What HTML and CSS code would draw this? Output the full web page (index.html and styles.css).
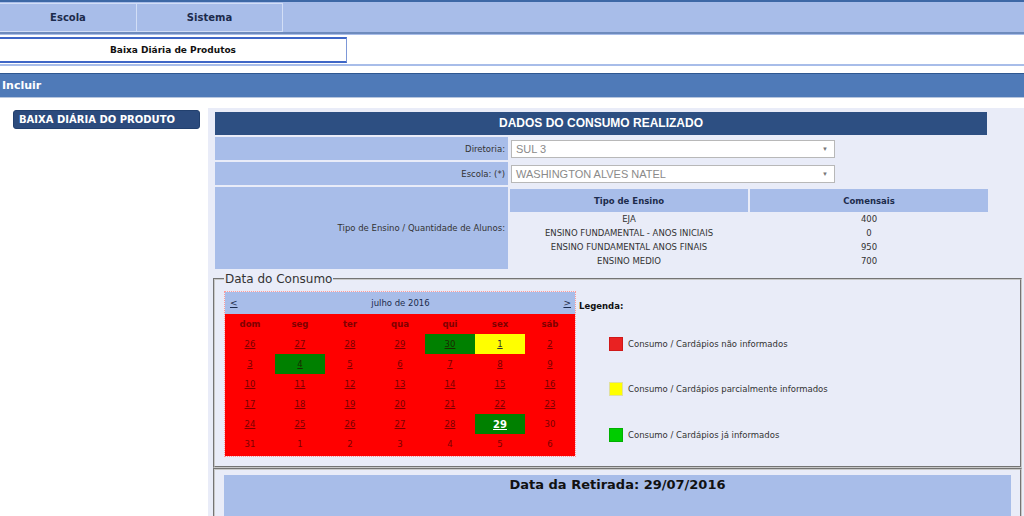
FILE: index.html
```html
<!DOCTYPE html>
<html lang="pt-BR">
<head>
<meta charset="utf-8">
<title>Baixa Diária de Produtos</title>
<link rel="stylesheet" href="styles.css">
</head>
<body>
<div class="topbar">
  <div class="tab">Escola</div>
  <div class="tab tab-second">Sistema</div>
</div>
<div class="subbar">
  <div class="subtab">Baixa Diária de Produtos</div>
</div>
<div class="titlebar">Incluir</div>
<div class="main">
  <div class="sidebar">
    <div class="side-btn">BAIXA DIÁRIA DO PRODUTO</div>
  </div>
  <div class="content">
    <div class="form">
      <div class="form-head">DADOS DO CONSUMO REALIZADO</div>
      <div class="form-row">
        <div class="label">Diretoria:</div>
        <div class="value"><div class="select"><span>SUL 3</span><span class="arrow">▼</span></div></div>
      </div>
      <div class="form-row">
        <div class="label">Escola: (*)</div>
        <div class="value"><div class="select"><span>WASHINGTON ALVES NATEL</span><span class="arrow">▼</span></div></div>
      </div>
      <div class="form-row form-row-tall">
        <div class="label">Tipo de Ensino / Quantidade de Alunos:</div>
        <div class="value">
          <div class="nested">
            <div class="nh">Tipo de Ensino</div><div class="nh">Comensais</div>
            <div class="nd">EJA</div><div class="nd">400</div>
            <div class="nd">ENSINO FUNDAMENTAL - ANOS INICIAIS</div><div class="nd">0</div>
            <div class="nd">ENSINO FUNDAMENTAL ANOS FINAIS</div><div class="nd">950</div>
            <div class="nd">ENSINO MEDIO</div><div class="nd">700</div>
          </div>
        </div>
      </div>
    </div>

    <fieldset class="box">
      <legend class="box-legend">Data do Consumo</legend>
      <div class="cal-wrap">
        <div class="calendar">
          <div class="cal-head"><span class="cal-nav">&lt;</span><span>julho de 2016</span><span class="cal-nav">&gt;</span></div>
          <div class="cal-grid">
            <div class="dn">dom</div><div class="dn">seg</div><div class="dn">ter</div><div class="dn">qua</div><div class="dn">qui</div><div class="dn">sex</div><div class="dn">sáb</div>
            <div class="d l">26</div><div class="d l">27</div><div class="d l">28</div><div class="d l">29</div><div class="d l g">30</div><div class="d l y">1</div><div class="d l">2</div>
            <div class="d l">3</div><div class="d l g">4</div><div class="d l">5</div><div class="d l">6</div><div class="d l">7</div><div class="d l">8</div><div class="d l">9</div>
            <div class="d l">10</div><div class="d l">11</div><div class="d l">12</div><div class="d l">13</div><div class="d l">14</div><div class="d l">15</div><div class="d l">16</div>
            <div class="d l">17</div><div class="d l">18</div><div class="d l">19</div><div class="d l">20</div><div class="d l">21</div><div class="d l">22</div><div class="d l">23</div>
            <div class="d l">24</div><div class="d l">25</div><div class="d l">26</div><div class="d l">27</div><div class="d l">28</div><div class="d l g today">29</div><div class="d">30</div>
            <div class="d">31</div><div class="d">1</div><div class="d">2</div><div class="d">3</div><div class="d">4</div><div class="d">5</div><div class="d">6</div>
          </div>
        </div>
        <div class="legend">
          <div class="legend-title">Legenda:</div>
          <div class="legend-item"><span class="sw sw-red"></span>Consumo / Cardápios não informados</div>
          <div class="legend-item"><span class="sw sw-yellow"></span>Consumo / Cardápios parcialmente informados</div>
          <div class="legend-item"><span class="sw sw-green"></span>Consumo / Cardápios já informados</div>
        </div>
      </div>
    </fieldset>

    <div class="box2">
      <div class="retirada">Data da Retirada: 29/07/2016</div>
    </div>
  </div>
</div>
</body>
</html>
```

FILE: styles.css
```css
html, body {
  margin: 0;
  padding: 0;
}
body {
  font-family: "DejaVu Sans", Verdana, sans-serif;
  font-size: 8.5px;
  color: #333;
  background: #fff;
  height: 516px;
  overflow: hidden;
}

/* top menu */
.topbar {
  display: flex;
  border-top: 2px solid #3d68a6;
  background: #a8bde9;
  padding-top: 1px;
  box-sizing: border-box;
  height: 32px;
}
.tab {
  box-sizing: border-box;
  width: 137px;
  height: 29px;
  border: 1px solid #d2def6;
  border-left: none;
  display: flex;
  align-items: center;
  justify-content: center;
  font-weight: bold;
  font-size: 10px;
  color: #1c2b4c;
}
.tab-second {
  width: 146px;
}

.subbar {
  border-top: 2px solid #6e8bbd;
  box-shadow: inset 0 1px 0 #a8bde9;
  border-bottom: 2px solid #a8bde9;
  padding: 3px 0 1px 0;
  background: #fff;
}
.subtab {
  box-sizing: border-box;
  width: 347px;
  height: 26px;
  border-top: 2px solid #3e66c6;
  border-bottom: 2px solid #3e66c6;
  border-right: 1px solid #7d98d8;
  display: flex;
  align-items: center;
  justify-content: center;
  font-weight: bold;
  font-size: 9px;
  color: #111;
}

.titlebar {
  margin-top: 7px;
  height: 23px;
  line-height: 23px;
  background: #4f7ab8;
  border-top: 1px solid #2f5790;
  border-bottom: 1px solid #b7c6de;
  color: #fff;
  font-weight: bold;
  font-size: 11px;
  padding-left: 2px;
}

/* main */
.main {
  display: flex;
  margin-top: 10px;
  height: 420px;
}
.sidebar {
  width: 208px;
  flex: none;
  padding: 2px 0 0 13px;
  box-sizing: border-box;
  background: #fff;
}
.side-btn {
  box-sizing: border-box;
  width: 187px;
  height: 19px;
  line-height: 18px;
  background: #2c4b7d;
  border: 1px solid #22406e;
  border-radius: 3px;
  color: #fff;
  font-weight: bold;
  font-size: 10px;
  padding-left: 5px;
}
.content {
  flex: 1;
  background: #e9ecf8;
  padding: 4px 0 0 5px;
}

/* form */
.form {
  width: 773px;
  margin-left: 2px;
}
.form-head {
  width: 772px;
  height: 23px;
  line-height: 23px;
  background: #2d4f82;
  color: #fff;
  text-align: center;
  font-family: "Liberation Sans", Arial, sans-serif;
  font-weight: bold;
  font-size: 12px;
}
.form-row {
  display: grid;
  grid-template-columns: 293px 478px;
  column-gap: 2px;
  margin-top: 2px;
  height: 23px;
}
.form-row-tall {
  height: 82px;
}
.label {
  background: #a8bde9;
  display: flex;
  align-items: center;
  justify-content: flex-end;
  padding-right: 3px;
  color: #333;
}
.value {
  padding-top: 3px;
}
.select {
  box-sizing: border-box;
  width: 324px;
  height: 18px;
  margin-left: 1px;
  border: 1px solid #b8b8b8;
  background: #fff;
  color: #8a8a8a;
  font-family: "Liberation Sans", Arial, sans-serif;
  font-size: 11px;
  display: flex;
  align-items: center;
  justify-content: space-between;
  padding: 0 6px 0 4px;
}
.arrow {
  font-size: 6px;
  color: #777;
}
.form-row-tall .value {
  padding-top: 2px;
}
.nested {
  display: grid;
  grid-template-columns: 238px 238px;
  grid-template-rows: 23px;
  grid-auto-rows: 14px;
  column-gap: 2px;
}
.nh {
  background: #a8bde9;
  display: flex;
  align-items: center;
  justify-content: center;
  font-weight: bold;
  color: #1c2b4c;
}
.nd {
  text-align: center;
  line-height: 15px;
  color: #333;
}

/* fieldset */
.box {
  margin: 3px 2px 0 0;
  padding: 5px 0 9px 9px;
  border: 2px groove #c8c8c8;
  min-width: 0;
}
.box-legend {
  font-size: 12px;
  color: #333;
  padding: 0 1px;
  line-height: 14px;
}
.cal-wrap {
  display: flex;
  align-items: flex-start;
}
.calendar {
  width: 350px;
  border: 1px dotted #ff9a9a;
  flex: none;
}
.cal-head {
  height: 22px;
  background: #a8bde9;
  display: flex;
  align-items: center;
  justify-content: space-between;
  padding: 0 4px 0 5px;
  color: #1c2b4c;
}
.cal-nav {
  text-decoration: underline;
  font-size: 9px;
}
.cal-grid {
  display: grid;
  grid-template-columns: repeat(7, 50px);
  grid-template-rows: 20px;
  grid-auto-rows: 20px;
  background: #ff0000;
  padding-bottom: 2px;
}
.dn {
  display: flex;
  align-items: center;
  justify-content: center;
  font-weight: bold;
  color: #800000;
}
.d {
  display: flex;
  align-items: center;
  justify-content: center;
  color: #7a0000;
}
.l {
  text-decoration: underline;
}
.g {
  background: #008000;
  color: #1a2a00;
}
.y {
  background: #ffff00;
  color: #333;
}
.today {
  color: #fff;
  font-weight: bold;
  font-size: 10px;
}

.legend {
  margin-left: 3px;
  padding-top: 10px;
  color: #333;
}
.legend-title {
  font-weight: bold;
  color: #111;
  line-height: 11px;
}
.legend-item {
  display: flex;
  align-items: center;
  margin: 25px 0 0 30px;
  height: 14px;
}
.legend-item + .legend-item {
  margin-top: 31px;
}
.legend-item:last-child {
  margin-top: 32px;
}
.sw {
  width: 14px;
  height: 14px;
  box-sizing: border-box;
  margin-right: 5px;
  flex: none;
}
.sw-red {
  background: #e92222;
  border: 1px solid #d01818;
}
.sw-yellow {
  background: #ffff00;
  border: 1px solid #e0e0a0;
}
.sw-green {
  background: #00cc00;
  border: 1px solid #00b000;
}

.box2 {
  margin-right: 2px;
  border: 2px groove #c8c8c8;
  border-bottom: none;
  padding: 5px 9px 0 9px;
  height: 60px;
}
.retirada {
  background: #a8bde9;
  height: 60px;
  text-align: center;
  font-weight: bold;
  font-size: 13px;
  color: #111;
  padding-top: 2px;
  box-sizing: border-box;
}
```
